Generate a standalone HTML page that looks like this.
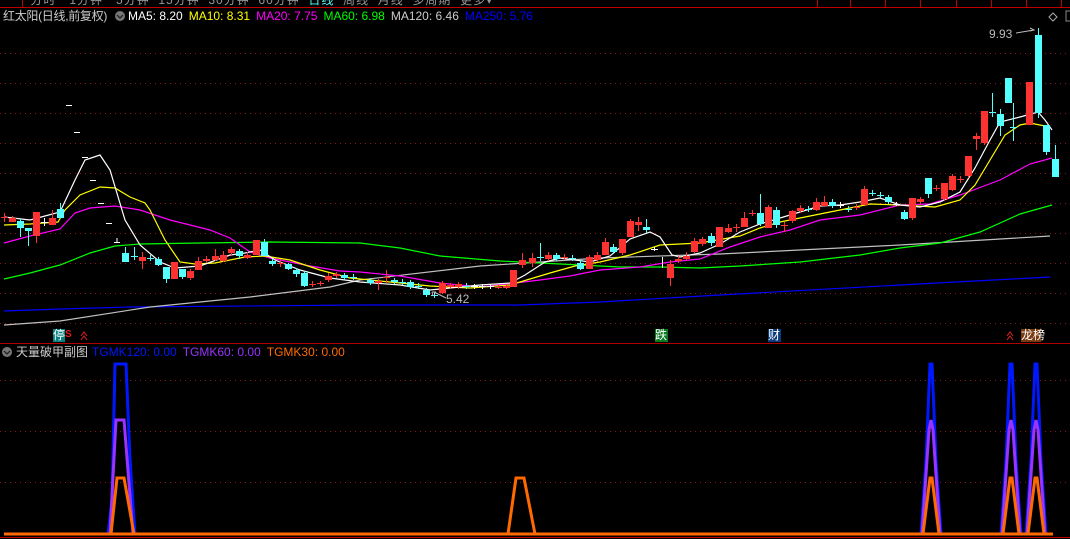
<!DOCTYPE html>
<html><head><meta charset="utf-8">
<style>
html,body{margin:0;padding:0;background:#000;width:1070px;height:539px;overflow:hidden;font-family:"Liberation Sans","Noto Sans CJK SC",sans-serif}
.t{position:absolute;font-size:12px;white-space:nowrap;line-height:14px}
.t span{margin-right:6px}
</style></head><body>
<svg id="s" width="1070" height="539" style="position:absolute;left:0;top:0" xmlns="http://www.w3.org/2000/svg">
<g id="grid" stroke="#8a1a1a" stroke-dasharray="1,4" stroke-width="1"></g>
<line x1="0" y1="7.5" x2="1070" y2="7.5" stroke="#c00000"/>
<g stroke="#c00000"><line x1="22.5" y1="0" x2="22.5" y2="7"/><line x1="817.5" y1="0" x2="817.5" y2="7"/><line x1="850.5" y1="0" x2="850.5" y2="7"/><line x1="885.5" y1="0" x2="885.5" y2="7"/><line x1="920.5" y1="0" x2="920.5" y2="7"/><line x1="956.5" y1="0" x2="956.5" y2="7"/><line x1="991.5" y1="0" x2="991.5" y2="7"/><line x1="1026.5" y1="0" x2="1026.5" y2="7"/><line x1="1061.5" y1="0" x2="1061.5" y2="7"/></g>
<line x1="0" y1="343.5" x2="1070" y2="343.5" stroke="#b00000"/>
<line x1="0" y1="537.5" x2="1070" y2="537.5" stroke="#c00000"/>
<g fill="none" stroke-width="1.2">
<polyline stroke="#0000ff" points="4,311 60,309 130,307 360,305 520,305 600,302 720,295 900,285 1050,277"/>
<polyline stroke="#c0c0c0" points="4,325 60,321 150,307 250,297 330,287 360,280 480,266 600,258 720,254 900,245 1050,236"/>
<polyline stroke="#00ff00" points="4,279 30,273 60,265 90,253 115,246 140,244 200,243 270,242 360,243 400,248 440,256 500,261 560,264 620,267 660,267 700,268 740,266 800,262 860,255 900,248 940,243 980,232 1020,214 1052,205"/>
<polyline stroke="#ff00ff" points="4,243 30,236 60,229 75,213 90,208 115,206 140,210 170,220 210,230 230,238 250,252 270,258 310,266 340,271 360,272 400,276 440,283 480,287 515,283 540,280 570,276 600,270 640,267 670,262 700,259 730,247 760,237 790,230 820,220 860,215 900,205 930,204 960,195 1000,180 1030,164 1052,158"/>
<polyline stroke="#ffff00" points="4,225 30,224 58,222 65,210 80,195 100,187 115,188 130,197 145,203 150,210 165,240 180,262 195,264 215,263 245,257 265,256 290,260 320,270 350,278 390,282 430,286 470,288 510,285 550,273 575,266 600,262 630,255 660,245 680,244 700,243 740,236 760,228 780,222 800,218 830,212 870,204 900,205 935,207 960,200 975,185 990,160 1005,135 1020,125 1030,123 1045,126"/>
<polyline stroke="#ffffff" points="4,217 30,220 60,212 75,180 85,160 100,155 110,170 125,220 140,245 160,262 175,268 200,266 230,255 245,253 260,250 275,260 300,270 330,278 360,282 400,285 430,290 460,287 480,285 510,283 525,275 545,262 560,258 590,262 610,256 630,239 650,232 660,237 672,255 680,257 700,253 720,244 740,232 760,224 780,218 800,212 820,206 840,205 860,202 880,198 900,205 920,207 940,202 960,192 975,168 990,140 1000,122 1020,117 1038,112 1045,120 1052,130"/>
</g>
<g id="c"></g>
<g stroke="#fff" stroke-width="1"><line x1="66" y1="105.5" x2="72" y2="105.5"/><line x1="74" y1="132.5" x2="80" y2="132.5"/><line x1="82" y1="157.5" x2="88" y2="157.5"/><line x1="90" y1="180.5" x2="96" y2="180.5"/><line x1="98" y1="203.5" x2="104" y2="203.5"/><line x1="106" y1="223.5" x2="112" y2="223.5"/><line x1="114" y1="242.5" x2="120" y2="242.5"/><line x1="117" y1="238" x2="117" y2="242"/></g>
<g stroke="#bbb" fill="none"><path d="M434 292 L446 298"/><path d="M432 292 l4 0 M432 292 l1 4"/><path d="M1016 33 L1034 30 M1030 28 l4 2 -4 1"/></g>
<g fill="none" stroke-width="3" stroke-linejoin="miter">
<polyline stroke="#0018ff" points="108,534 112,500 115,364 126,364 130,460 135,534"/>
<polyline stroke="#0018ff" points="921,534 926,460 930,364 932,364 936,460 941,534"/>
<polyline stroke="#0018ff" points="1001,534 1006,460 1010,364 1012,364 1016,460 1021,534"/>
<polyline stroke="#0018ff" points="1026,534 1031,460 1035,364 1037,364 1041,460 1046,534"/>
<polyline stroke="#9933ff" points="110,534 116,420 124,420 133,534"/>
<polyline stroke="#9933ff" points="922,534 929,430 931,420 933,430 940,534"/>
<polyline stroke="#9933ff" points="1002,534 1009,430 1011,420 1013,430 1020,534"/>
<polyline stroke="#9933ff" points="1027,534 1034,430 1036,420 1038,430 1045,534"/>
<polyline stroke="#ff6a00" points="4,534 1053,534"/>
<polyline stroke="#ff6a00" points="111,534 117,478 124,478 134,534"/>
<polyline stroke="#ff6a00" points="508,534 516,478 524,478 535,534"/>
<polyline stroke="#ff6a00" points="923,534 930,478 932,478 939,534"/>
<polyline stroke="#ff6a00" points="1003,534 1010,478 1012,478 1019,534"/>
<polyline stroke="#ff6a00" points="1028,534 1035,478 1037,478 1044,534"/>
</g>
<circle cx="120" cy="16" r="5" fill="#777"/><path d="M117 15 l3 3 3-3" stroke="#222" fill="none" stroke-width="1.3"/>
<circle cx="7" cy="352" r="5" fill="#777"/><path d="M4 351 l3 3 3-3" stroke="#222" fill="none" stroke-width="1.3"/>
<path d="M1053 13 l4 4 -4 4 -4 -4z" stroke="#aaa" fill="none"/>
<rect x="1066" y="11" width="6" height="10" stroke="#888" fill="none"/>
<rect x="53" y="329" width="12" height="13" fill="#0a8080"/>
<path d="M81 336 l3-4 3 4 M81 340 l3-4 3 4" stroke="#e02020" fill="none"/>
<rect x="655" y="329" width="13" height="13" fill="#0a7a20"/>
<rect x="768" y="329" width="13" height="13" fill="#0a3a7a"/>
<path d="M1007 336 l3-4 3 4 M1007 340 l3-4 3 4" stroke="#e02020" fill="none"/>
<rect x="1021" y="329" width="20" height="13" fill="#7a3a10"/>
</svg>
<div class="t" style="left:0;top:-7px;color:#999;letter-spacing:1px">&nbsp;&nbsp;&nbsp;&nbsp;&nbsp;&nbsp;&nbsp;分时&nbsp;&nbsp;&nbsp;1分钟&nbsp;&nbsp;&nbsp;5分钟&nbsp;&nbsp;15分钟&nbsp;&nbsp;30分钟&nbsp;&nbsp;60分钟&nbsp;&nbsp;<span style="color:#5ff;margin:0">日线</span>&nbsp;&nbsp;周线&nbsp;&nbsp;月线&nbsp;&nbsp;多周期&nbsp;&nbsp;更多▾</div>
<div class="t" style="left:3px;top:9px;color:#ccc;letter-spacing:-0.3px">红太阳(日线,前复权)</div>
<div class="t" style="left:128px;top:9px"><span style="color:#fff">MA5: 8.20</span><span style="color:#ff0">MA10: 8.31</span><span style="color:#f0f">MA20: 7.75</span><span style="color:#0f0">MA60: 6.98</span><span style="color:#ccc">MA120: 6.46</span><span style="color:#00f">MA250: 5.76</span></div>
<div class="t" style="left:16px;top:345px;color:#ccc">天量破甲副图</div>
<div class="t" style="left:92px;top:345px"><span style="color:#0018ff">TGMK120: 0.00</span><span style="color:#9933ff">TGMK60: 0.00</span><span style="color:#ff6a00">TGMK30: 0.00</span></div>
<div class="t" style="left:446px;top:292px;color:#bbb">5.42</div>
<div class="t" style="left:989px;top:27px;color:#bbb">9.93</div>
<div class="t" style="left:53px;top:328px;color:#fff">停</div>
<div class="t" style="left:65px;top:328px;color:#e02020;font-weight:bold;font-size:10px">S</div>
<div class="t" style="left:655px;top:328px;color:#fff">跌</div>
<div class="t" style="left:768px;top:328px;color:#fff">财</div>
<div class="t" style="left:1021px;top:328px;color:#fff">龙榜</div>
<script>
var g=document.getElementById('grid'),h='';
[53,83,113,143,173,203,233,263,293,323,380,431,482].forEach(function(y){h+='<line x1="0" y1="'+(y+.5)+'" x2="1070" y2="'+(y+.5)+'"/>';});
g.innerHTML=h;
var R='#ff3232',C='#54ffff';
var d=[[4,217,217,R,213,222],[12,218,222,R,216,222],[20,221,228,C,219,237],[28,228,231,C,228,246],[36,212,236,R,212,243],[44,222,222,'#fff',218,226],[52,218,225,R,210,225],[60,209,218,C,203,218],
[125,253,262,C,247,262],[134,256,256,C,247,260],[142,257,261,R,252,269],[150,258,258,C,255,261],[158,259,265,C,257,266],[166,267,279,C,267,283],[174,262,279,R,262,279],[182,269,277,C,269,279],[190,271,278,R,269,280],[198,261,270,R,257,270],[206,259,261,R,256,263],[215,256,260,R,249,261],[223,255,261,R,251,262],[231,249,253,R,247,256],[239,251,256,C,249,259],[247,255,258,R,252,259],[256,240,255,R,240,255],[264,242,256,C,239,256],[272,261,264,C,259,266],[280,263,263,R,259,267],[288,264,269,C,263,270],[296,270,274,C,268,277],[304,273,286,C,271,287],[312,284,284,R,281,287],[320,283,284,R,281,286],[328,276,280,R,273,282],[336,274,276,R,272,278],[344,275,278,C,273,280],[353,277,277,C,274,280],
[370,280,283,C,278,285],[378,281,283,R,279,290],[386,277,277,R,270,283],[394,280,282,C,278,284],[402,282,282,C,279,285],[410,282,287,C,280,289],[418,286,286,C,283,289],[426,290,295,C,288,297],[434,295,295,C,292,298],[442,283,293,R,281,294],[450,285,287,R,283,289],[458,284,287,R,282,289],[466,286,286,C,283,289],[474,286,286,'#fff',284,289],[482,286,286,'#fff',284,289],[490,286,286,'#fff',284,289],[498,287,288,R,285,289],[506,286,288,R,284,289],[513,270,287,R,270,287],[522,260,265,R,253,268],[532,258,263,R,253,267],[540,257,257,C,243,261],[548,255,259,R,252,261],[556,255,259,C,253,261],[564,257,257,R,254,260],[572,258,258,C,255,261],[580,263,269,C,260,270],[589,257,269,R,255,269],[597,255,260,R,252,262],[605,242,255,R,238,255],[613,247,252,C,244,254],[622,239,253,R,239,255],[630,221,237,R,219,237],[638,222,225,R,217,231],[646,227,230,C,219,233],[654,249,249,'#fff',247,251],[662,0,0,'#fff',257,268],[670,264,278,R,260,286],[678,259,261,R,256,263],[686,256,259,R,252,261],[694,241,252,R,238,253],[702,239,244,R,237,246],[711,236,243,C,233,246],[719,227,247,R,227,247],
[728,228,232,R,224,233],[736,227,227,R,224,232],[744,218,227,R,212,227],[752,213,214,R,210,216],[760,213,224,C,194,226],[768,207,228,R,205,228],[776,210,225,C,207,228],[784,225,225,R,222,232],[792,211,221,R,210,223],[800,208,211,R,205,213],[808,209,209,C,206,212],[816,202,210,R,198,211],[824,202,206,R,196,207],[832,202,206,C,199,208],[840,205,205,'#fff',202,208],[848,209,209,C,206,212],[856,207,207,R,204,210],[864,189,205,R,186,205],[872,193,193,C,190,196],[880,195,195,C,192,198],[888,197,202,C,195,204],[896,204,204,'#fff',202,206],[904,212,219,C,210,220],[912,198,218,R,198,220],[920,199,202,R,197,204],[928,178,194,C,178,198],[936,188,188,R,185,191],[944,183,199,R,183,201],[952,176,190,R,174,191],[960,179,179,R,176,183],[968,156,176,R,156,178],[976,136,139,R,133,150],[984,111,143,R,111,145],[992,112,112,C,93,117],[1000,114,126,C,109,136],[1008,78,103,C,78,103],[1013,127,127,C,103,141],[1029,82,125,R,82,125],[1038,35,113,C,28,118],[1046,125,152,C,125,155],[1055,159,177,C,145,177]];
var s='';
d.forEach(function(a){var x=a[0],t=a[1],b=a[2],c=a[3];
s+='<line x1="'+(x+.5)+'" y1="'+a[4]+'" x2="'+(x+.5)+'" y2="'+a[5]+'" stroke="'+c+'"/>';
if(t===0)return;
var hh=Math.max(1,b-t);s+='<rect x="'+(x-3)+'" y="'+t+'" width="7" height="'+hh+'" fill="'+c+'"/>';});
document.getElementById('c').innerHTML=s;
</script>
</body></html>
